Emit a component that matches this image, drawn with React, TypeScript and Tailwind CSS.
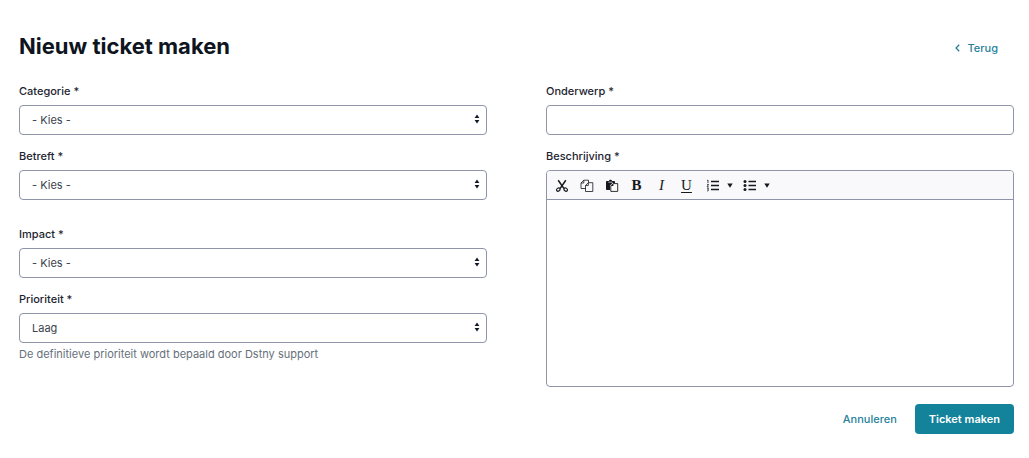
import { useId, type ReactNode } from 'react';

const controlClass =
  'block h-[30px] w-full rounded border border-[#8f95a8] bg-white px-3 text-[11px] text-[#3a424d] outline-none focus:border-[#13829b]';

const Label = ({ htmlFor, children }: { htmlFor: string; children: ReactNode }) => (
  <label htmlFor={htmlFor} className="mb-1.5 block text-[11px] leading-4 font-medium text-[#1d2430]">
    {children} *
  </label>
);

const SelectField = ({ label, options, hint }: { label: string; options: string[]; hint?: string }) => {
  const id = useId();

  return (
    <div>
      <Label htmlFor={id}>{label}</Label>
      <div className="relative">
        <select id={id} className={`${controlClass} appearance-none`}>
          {options.map((option) => (
            <option key={option}>{option}</option>
          ))}
        </select>
        <svg
          viewBox="0 0 6 10"
          className="pointer-events-none absolute top-[9px] right-[7px] h-2.5 w-1.5"
          fill="#111827"
          aria-hidden="true"
        >
          <path d="M3 .5 5.4 4H.6zM3 9.500.6 6h4.800z" />
        </svg>
      </div>
      {hint && <p className="mt-[3px] text-[11px] leading-4 text-[#66707a]">{hint}</p>}
    </div>
  );
};

const CutIcon = () => (
  <svg viewBox="0 0 14 14" className="h-3.5 w-3.5" fill="none" stroke="currentColor" aria-hidden="true">
    <path d="M3.2 1.2 9 9.6M10.8 1.2 5 9.6" strokeWidth="1.5" />
    <ellipse cx="3.3" cy="10.6" rx="1.9" ry="1.5" strokeWidth="1.2" transform="rotate(-35 3.3 10.6)" />
    <ellipse cx="10.7" cy="10.6" rx="1.9" ry="1.5" strokeWidth="1.2" transform="rotate(35 10.7 10.6)" />
  </svg>
);

const CopyIcon = () => (
  <svg viewBox="0 0 14 14" className="h-3.5 w-3.5" fill="none" stroke="currentColor" strokeWidth="0.8" aria-hidden="true">
    <path d="M5.500 9.500H1V4l2.800-2.800h4.700v2.500" />
    <path d="M1 4h2.800V1.200" />
    <path d="M5.500 6.500 8.300 3.700h4.500v8.800H5.500z" />
    <path d="M5.500 6.500h2.800V3.700" />
  </svg>
);

const PasteIcon = () => (
  <svg viewBox="0 0 14 14" className="h-3.5 w-3.5" fill="currentColor" aria-hidden="true">
    <path d="M1.800 2h2.100c.2-.8.8-1.300 1.600-1.300S6.900 1.200 7.100 2h2.100c.5 0 .8.3.8.8V4H7.500L5 6.500V11H1.800c-.5 0-.8-.3-.8-.8V2.800c0-.5.3-.8.8-.8z" />
    <path d="M3.400 3.200h4.200" stroke="#fff" strokeWidth="0.7" />
    <path d="M5.800 7 8.200 4.600h4.500v7.800H5.800z" fill="#fff" stroke="currentColor" strokeWidth="0.9" />
    <path d="M5.800 7.100h2.600V4.600z" />
  </svg>
);

const OrderedIcon = () => (
  <svg viewBox="0 0 14 14" className="h-3.5 w-3.5" fill="none" stroke="currentColor" aria-hidden="true">
    <path d="M5 2.500h8M5 6.500h8M5 10.500h8" strokeWidth="1.300" />
    <path
      d="M1.200 1.500 2 1v3M1 5.400h1.500L1.100 7.800h1.600M1 9.200h1.500L1.800 10.500c1.300 0 1.100 1.600-.8 1.400"
      strokeWidth="0.8"
    />
  </svg>
);

const BulletIcon = () => (
  <svg viewBox="0 0 14 14" className="h-3.5 w-3.5" stroke="currentColor" aria-hidden="true">
    <path d="M5.500 2.500h7.500M5.500 6.500h7.500M5.500 10.500h7.500" strokeWidth="1.300" />
    <g fill="currentColor" stroke="none">
      <circle cx="2" cy="2.500" r="1.500" />
      <circle cx="2" cy="6.500" r="1.500" />
      <circle cx="2" cy="10.500" r="1.500" />
    </g>
  </svg>
);

const Caret = () => (
  <svg viewBox="0 0 6 5" className="h-[5px] w-1.5" fill="currentColor" aria-hidden="true">
    <path d="M.3.500h5.400L3 4.700z" />
  </svg>
);

const tools = [
  { name: 'Knippen', icon: <CutIcon /> },
  { name: 'Kopiëren', icon: <CopyIcon /> },
  { name: 'Plakken', icon: <PasteIcon /> },
  { name: 'Vet', icon: <span className="font-bold">B</span> },
  { name: 'Cursief', icon: <span className="italic">I</span> },
  { name: 'Onderstrepen', icon: <span className="underline underline-offset-2">U</span> },
];

const listTools = [
  { name: 'Genummerde lijst', icon: <OrderedIcon /> },
  { name: 'Opsomming', icon: <BulletIcon /> },
];

const Editor = () => (
  <div>
    <Label htmlFor="description">Beschrijving</Label>
    <div className="overflow-hidden rounded border border-[#8f95a8] bg-white">
      <div
        role="toolbar"
        aria-label="Opmaak"
        className="flex h-[29px] items-center gap-0.5 border-b border-[#8f95a8] bg-[#f9f9fb] pt-px pl-0.5 font-['Liberation_Serif',serif] text-[15px] text-[#16191f]"
      >
        <div className="flex">
          {tools.map(({ name, icon }) => (
            <button key={name} type="button" aria-label={name} className="flex h-6 w-[25px] items-center justify-center">
              {icon}
            </button>
          ))}
        </div>
        <div className="flex">
          {listTools.map(({ name, icon }) => (
            <button key={name} type="button" aria-label={name} className="flex h-6 w-[37px] items-center justify-center gap-[7px]">
              {icon}
              <Caret />
            </button>
          ))}
        </div>
      </div>
      <textarea
        id="description"
        className="block h-[186px] w-full resize-none px-3 py-2 text-[11px] text-[#3a424d] outline-none"
      />
    </div>
  </div>
);

const App = () => (
  <main className="min-h-screen bg-white pt-[30px] pr-[15px] pb-6 pl-[19px] font-['Inter',sans-serif] text-[11px]">
    <header className="mb-[21px] flex items-center justify-between pr-4">
      <h1 className="text-[22px] leading-8 font-bold text-[#0e1420]">Nieuw ticket maken</h1>
      <a href="#" className="flex items-center gap-2 pt-1 leading-4 font-medium text-[#28819a]">
        <svg viewBox="0 0 5 8" className="h-2 w-[5px]" fill="none" stroke="currentColor" strokeWidth="1.3" aria-hidden="true">
          <path d="M4.200.8 1 4l3.200 3.200" />
        </svg>
        Terug
      </a>
    </header>

    <form onSubmit={(e) => e.preventDefault()}>
      <div className="grid grid-cols-2 gap-[59px]">
        <div className="flex flex-col gap-[26px]">
          <div className="flex flex-col gap-[13px]">
            <SelectField label="Categorie" options={['- Kies -']} />
            <SelectField label="Betreft" options={['- Kies -']} />
          </div>
          <div className="flex flex-col gap-[13px]">
            <SelectField label="Impact" options={['- Kies -']} />
            <SelectField
              label="Prioriteit"
              options={['Laag']}
              hint="De definitieve prioriteit wordt bepaald door Dstny support"
            />
          </div>
        </div>

        <div className="flex flex-col gap-[13px]">
          <div>
            <Label htmlFor="subject">Onderwerp</Label>
            <input id="subject" type="text" className={controlClass} />
          </div>
          <Editor />
        </div>
      </div>

      <div className="mt-[17px] flex items-center justify-end gap-[18px] font-medium">
        <button type="button" className="text-[#28819a]">
          Annuleren
        </button>
        <button type="submit" className="h-[30px] rounded bg-[#13829b] px-3.5 font-semibold text-white">
          Ticket maken
        </button>
      </div>
    </form>
  </main>
);

export default App;
